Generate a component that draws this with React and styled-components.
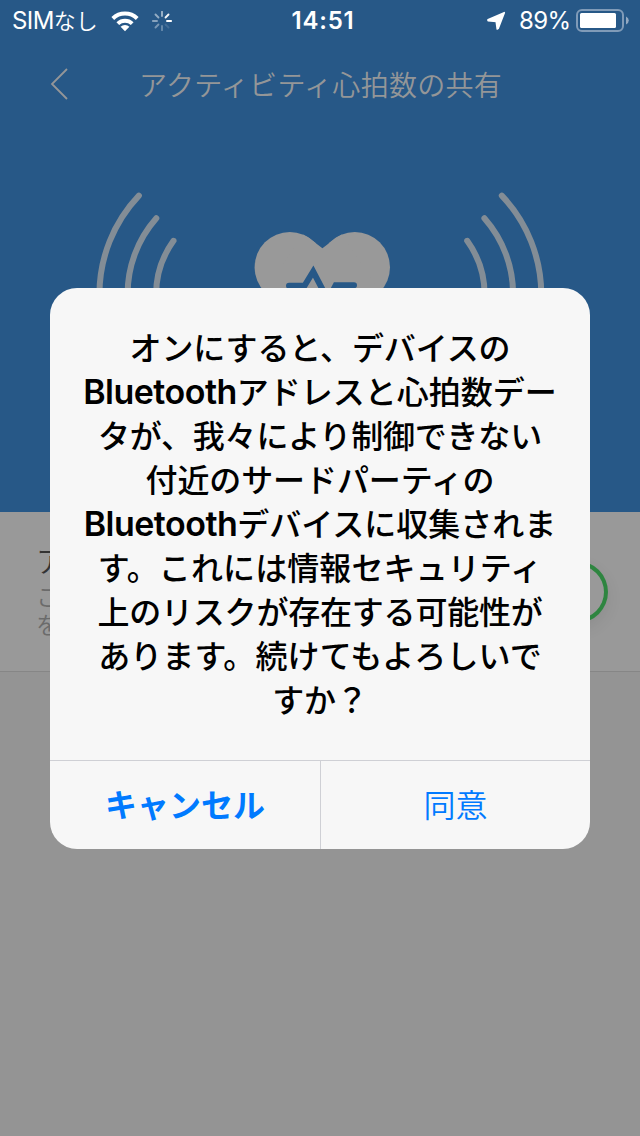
import React from "react";
import styled, { createGlobalStyle } from "styled-components";

const MESSAGE = [
  { text: "オンにすると、デバイスの", spacing: -0.1 },
  { text: "アドレスと心拍数デー", latin: "Bluetooth", spacing: 0 },
  { text: "タが、我々により制御できない", spacing: -0.2 },
  { text: "付近のサードパーティの", spacing: -0.1 },
  { text: "デバイスに収集されま", latin: "Bluetooth", spacing: 0 },
  { text: "す。これには情報セキュリティ", spacing: 0.1 },
  { text: "上のリスクが存在する可能性が", spacing: -0.2 },
  { text: "あります。続けてもよろしいで", spacing: 0.1 },
  { text: "すか？", spacing: -0.2 },
];

const SPOKES = [0.55, 0.95, 1, 0.12, 0.3, 0.38, 0.45, 0.5];

const StatusBar = () => (
  <Status>
    <StatusSide>
      <Carrier>
        SIM<span>なし</span>
      </Carrier>
      <WifiIcon />
      <Spinner />
    </StatusSide>
    <Clock>14:51</Clock>
    <StatusSide>
      <LocationIcon />
      <Percent>89%</Percent>
      <BatteryIcon />
    </StatusSide>
  </Status>
);

const WifiIcon = () => (
  <svg width="28" height="21" viewBox="0 0 28 21" fill="#fff">
    <path d="M14 20.2 9.6 15.8a6.5 6.5 0 0 1 8.8 0Z" />
    <path
      d="M6.8 12.6a10.6 10.6 0 0 1 14.4 0M1.8 7.5a17.6 17.6 0 0 1 24.4 0"
      fill="none"
      stroke="#fff"
      strokeWidth="4"
    />
  </svg>
);

const Spinner = () => (
  <SpinnerSvg width="20" height="20" viewBox="-10 -10 20 20">
    {SPOKES.map((opacity, i) => (
      <path
        key={i}
        d="M0 -5V-9.2"
        stroke="#fff"
        strokeWidth="1.9"
        strokeLinecap="round"
        opacity={opacity}
        transform={`rotate(${i * 45})`}
      />
    ))}
  </SpinnerSvg>
);

const LocationIcon = () => (
  <LocationSvg width="20" height="20" viewBox="0 0 20 20">
    <path
      d="M18.3 1.7 12.2 17.4 11.2 18 10.2 10.4 2 9.6 2 8.8Z"
      fill="#fff"
      stroke="#fff"
      strokeWidth="1.6"
      strokeLinejoin="round"
    />
  </LocationSvg>
);

const BatteryIcon = () => (
  <svg width="54" height="24" viewBox="0 0 54 24">
    <rect
      x="1"
      y="1"
      width="46"
      height="21"
      rx="5"
      fill="none"
      stroke="#809bb8"
      strokeWidth="2"
    />
    <rect x="4" y="4" width="36" height="15" rx="1.5" fill="#fff" />
    <path d="M50 7.5q2.8 1.4 2.8 4t-2.8 4Z" fill="#93a9c2" />
  </svg>
);

const Waves = () => (
  <g fill="none" stroke="#838d96" strokeWidth="6" strokeLinecap="round">
    <path d="M501.8 195.6A144 144 0 0 1 541.3 295" />
    <path d="M484.4 218.2A115 115 0 0 1 513.1 295" />
    <path d="M467.2 240.8A92 92 0 0 1 484.6 295" />
  </g>
);

const HeartRate = () => (
  <Illustration width="640" height="172" viewBox="0 128 640 172">
    <Waves />
    <g transform="translate(640.7 0) scale(-1 1)">
      <Waves />
    </g>
    <g fill="#999">
      <circle cx="289.8" cy="267.2" r="35.2" />
      <circle cx="354.8" cy="267.2" r="35.2" />
      <path d="M303 234.6Q307 236.3 311 239.6L322.4 248.2L334 239.6Q338 236.3 342 234.6L380 292L322 345L264 292Z" />
    </g>
    <path
      d="M289 285.7H304.5L313.2 271.5L328 300L335.7 285.3H354"
      fill="none"
      stroke="#275887"
      strokeWidth="6"
      strokeLinecap="round"
    />
  </Illustration>
);

const App = () => (
  <Screen>
    <GlobalStyle />
    <Header>
      <StatusBar />
      <NavBar>
        <svg width="20" height="32" viewBox="0 0 20 32">
          <path
            d="M17 1 2 16 17 31"
            fill="none"
            stroke="#949698"
            strokeWidth="1.8"
          />
        </svg>
        <Title>アクティビティ心拍数の共有</Title>
      </NavBar>
      <HeartRate />
    </Header>
    <Setting>
      <div>
        <SettingName>ア</SettingName>
        <SettingHint>
          こ
          <br />
          を
        </SettingHint>
      </div>
      <Toggle>
        <Knob />
      </Toggle>
    </Setting>

    <Overlay>
      <Dialog role="alertdialog">
        <Message>
          {MESSAGE.map(({ text, latin, spacing }) => (
            <Line key={text} $spacing={spacing}>
              {latin && <Latin>{latin}</Latin>}
              {text}
            </Line>
          ))}
        </Message>
        <Actions>
          <Action $bold>キャンセル</Action>
          <Action>同意</Action>
        </Actions>
      </Dialog>
    </Overlay>
  </Screen>
);

const GlobalStyle = createGlobalStyle`
  * {
    box-sizing: border-box;
  }

  body {
    margin: 0;
    font-family: Inter, "Noto Sans CJK JP", sans-serif;
  }

  svg {
    display: block;
    flex: none;
  }
`;

const Screen = styled.main`
  position: relative;
  width: 640px;
  height: 1136px;
  overflow: hidden;
  background-color: #949494;
`;

const Header = styled.header`
  height: 512px;
  background-color: #275887;
`;

const Status = styled.div`
  height: 40px;
  padding: 1px 10px 0 12px;
  display: grid;
  grid-template-columns: 1fr auto 1fr;
  align-items: center;
  color: #fff;
  font-size: 24px;
  line-height: 40px;
  white-space: nowrap;
`;

const StatusSide = styled.div`
  display: flex;
  align-items: center;

  &:last-child {
    justify-content: flex-end;
  }
`;

const Carrier = styled.div`
  width: 99px;
  letter-spacing: -0.6px;

  span {
    font-size: 22px;
    font-weight: 350;
    letter-spacing: 0;
  }
`;

const SpinnerSvg = styled.svg`
  margin-left: 13px;
`;

const Clock = styled.div`
  padding-left: 4px;
  font-weight: 600;
  letter-spacing: 0.8px;
`;

const LocationSvg = styled.svg`
  margin-right: 13px;
`;

const Percent = styled.div`
  width: 57px;
  font-size: 24px;
  letter-spacing: -0.6px;
`;

const NavBar = styled.nav`
  height: 88px;
  padding-left: 50px;
  display: flex;
  align-items: center;
`;

const Title = styled.h1`
  margin: 0 0 0 69px;
  color: #949698;
  font-size: 28px;
  font-weight: 350;
  letter-spacing: 0.3px;
  white-space: nowrap;
`;

const Illustration = styled.svg`
  width: 640px;
`;

const Setting = styled.section`
  height: 160px;
  padding: 30px 32px 0 36px;
  display: flex;
  justify-content: space-between;
  background-color: #999;
  border-bottom: 1px solid #868686;
`;

const SettingName = styled.div`
  color: #333;
  font-size: 30px;
  font-weight: 350;
  line-height: 38px;
`;

const SettingHint = styled.div`
  margin-top: 4px;
  color: #6b6b6b;
  font-size: 24px;
  font-weight: 350;
  line-height: 28px;
`;

const Toggle = styled.div`
  width: 102px;
  height: 62px;
  margin-top: 19px;
  padding: 4px;
  display: flex;
  justify-content: flex-end;
  border-radius: 31px;
  background-color: #2e8540;
  box-shadow: 0 6px 16px rgba(0, 0, 0, 0.08);
`;

const Knob = styled.div`
  width: 54px;
  height: 54px;
  border-radius: 50%;
  background-color: #999;
`;

const Overlay = styled.div`
  position: absolute;
  inset: 0;
  padding-top: 288px;
  display: flex;
  justify-content: center;
  align-items: flex-start;
`;

const Dialog = styled.div`
  width: 540px;
  height: 561px;
  overflow: hidden;
  border-radius: 27px;
  background-color: #f7f7f7;
`;

const Message = styled.div`
  height: 472px;
  padding-top: 39px;
  display: flex;
  flex-direction: column;
  align-items: center;
`;

const Line = styled.div`
  height: 44px;
  color: #000;
  font-size: 32px;
  font-weight: 500;
  line-height: 44px;
  letter-spacing: ${(props) => props.$spacing}px;
  white-space: nowrap;
`;

const Latin = styled.span`
  font-size: 34px;
  font-weight: 600;
  line-height: 1;
  letter-spacing: -0.5px;
`;

const Actions = styled.div`
  height: 89px;
  display: grid;
  grid-template-columns: 1fr 1fr;
  border-top: 1px solid #cfd0d5;
`;

const Action = styled.button`
  padding: 0 0 4px;
  border: 0;
  background-color: transparent;
  color: #007aff;
  font-family: inherit;
  font-size: 32px;
  font-weight: ${(props) => (props.$bold ? 700 : 350)};
  cursor: pointer;

  & + & {
    border-left: 1px solid #cfd0d5;
  }
`;

export default App;
